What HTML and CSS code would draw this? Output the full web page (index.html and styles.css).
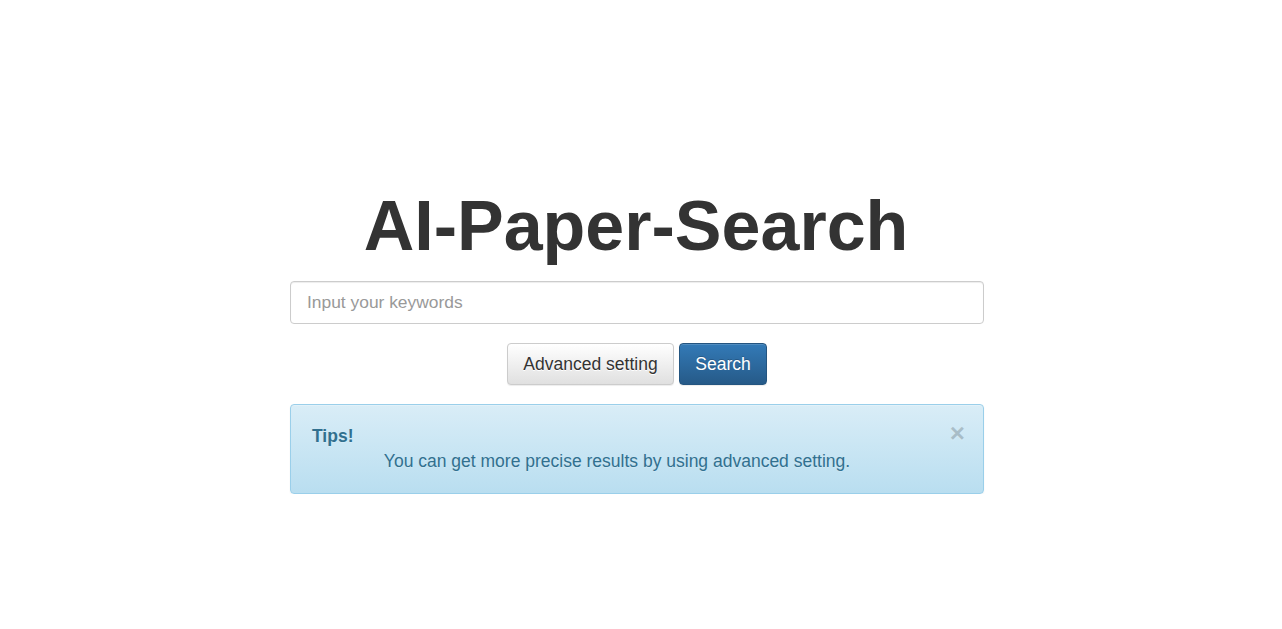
FILE: index.html
```html
<!DOCTYPE html>
<html>
<head>
<meta charset="utf-8">
<title>AI-Paper-Search</title>
<link rel="stylesheet" href="styles.css">
</head>
<body>
<main class="page">
  <div class="panel">
    <h1 class="title">AI-Paper-Search</h1>
    <input class="search-input" type="text" placeholder="Input your keywords">
    <div class="actions">
      <button class="btn btn-default">Advanced setting</button>
      <button class="btn btn-primary">Search</button>
    </div>
    <div class="alert">
      <button class="close" aria-label="Close">&times;</button>
      <strong class="alert-title">Tips!</strong>
      <p class="alert-text">You can get more precise results by using advanced setting.</p>
    </div>
  </div>
</main>
</body>
</html>
```

FILE: styles.css
```css
* { box-sizing: border-box; }
html, body { margin: 0; padding: 0; background: #fff; }
body {
  font-family: "Liberation Sans", Arial, sans-serif;
  color: #333;
}
.page {
  padding-top: 185px;
  padding-left: 290px;
}
.panel {
  width: 694px;
  display: flex;
  flex-direction: column;
  align-items: stretch;
}
.title {
  margin: 0;
  text-align: center;
  font-size: 70px;
  font-weight: bold;
  line-height: 82px;
  color: #333;
  height: 96px;
  padding-right: 2px;
}
.search-input {
  height: 43px;
  border: 1px solid #ccc;
  border-radius: 4px;
  padding: 0 16px;
  font-family: inherit;
  font-size: 17.4px;
  color: #555;
  box-shadow: inset 0 1px 1px rgba(0,0,0,.075);
  outline: none;
}
.search-input::placeholder { color: #999; }
.actions {
  display: flex;
  justify-content: center;
  gap: 5px;
  margin-top: 19px;
}
.btn {
  height: 42px;
  padding: 0 10px;
  font-family: inherit;
  font-size: 17.5px;
  white-space: nowrap;
  border-radius: 4px;
  border: 1px solid transparent;
  box-shadow: inset 0 1px 0 rgba(255,255,255,.15), 0 1px 1px rgba(0,0,0,.075);
  cursor: pointer;
}
.btn-default {
  color: #333;
  background-image: linear-gradient(to bottom, #fff 0, #e0e0e0 100%);
  border-color: #ccc;
  text-shadow: 0 1px 0 #fff;
  width: 167px;
}
.btn-primary {
  color: #fff;
  background-image: linear-gradient(to bottom, #337ab7 0, #265a88 100%);
  border-color: #245580;
  text-shadow: 0 -1px 0 rgba(0,0,0,.2);
  width: 88px;
}
.alert {
  position: relative;
  margin-top: 19px;
  height: 90px;
  padding: 19px 55px 15px 21px;
  border: 1px solid #9acfea;
  border-radius: 4px;
  color: #31708f;
  background-image: linear-gradient(to bottom, #d9edf7 0, #b9def0 100%);
  box-shadow: inset 0 1px 0 rgba(255,255,255,.25), 0 1px 2px rgba(0,0,0,.05);
  text-shadow: 0 1px 0 rgba(255,255,255,.2);
  font-size: 17.5px;
}
.alert-title {
  display: block;
  font-weight: bold;
  line-height: 25px;
}
.alert-text {
  margin: 0;
  line-height: 25px;
  text-align: center;
  padding-right: 6px;
}
.close {
  position: absolute;
  top: 15px;
  right: 18px;
  padding: 0;
  border: 0;
  background: transparent;
  font-family: inherit;
  font-size: 26px;
  font-weight: bold;
  line-height: 1;
  color: #000;
  opacity: .18;
  text-shadow: 0 1px 0 #fff;
  cursor: pointer;
}
```
